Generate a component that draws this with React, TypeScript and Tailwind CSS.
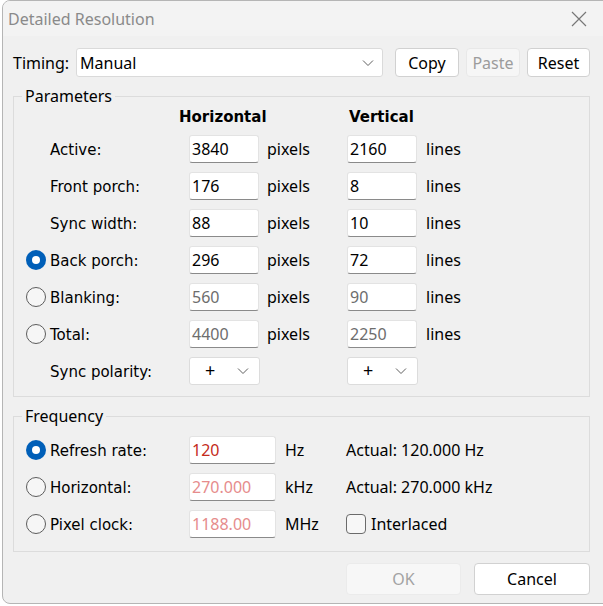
const ui = "font-['Noto_Sans',sans-serif] text-[16px]";
const lbl = "font-['DejaVu_Sans',sans-serif] text-[15px]";

function Chevron() {
  return (
    <svg width="12" height="8" viewBox="0 0 12 8" className="text-[#5f5f5f]">
      <polyline points="1,1.5 6,6.5 11,1.5" fill="none" stroke="currentColor" strokeWidth="1" />
    </svg>
  );
}

function Radio({ on }: { on?: boolean }) {
  if (on) {
    return (
      <span className="ml-[1px] flex h-[20px] w-[20px] items-center justify-center rounded-full bg-[#005fb8]">
        <span className="h-[8px] w-[8px] rounded-full bg-white" />
      </span>
    );
  }
  return <span className="ml-[1px] h-[20px] w-[20px] rounded-full border border-[#5c5c5c] bg-[#f6f6f6]" />;
}

function Field({ value, tone = "normal", wide }: { value: string; tone?: "normal" | "gray" | "red" | "pink"; wide?: boolean }) {
  const color =
    tone === "gray" ? "text-[#6d6d6d]" : tone === "red" ? "text-[#c42b1c]" : tone === "pink" ? "text-[#e68c8c]" : "text-black";
  return (
    <div
      className={`flex h-[28px] items-center rounded-[3px] border border-[#e3e3e3] border-b-[#8a8a8a] bg-white pl-[2px] ${ui} ${color} ${
        wide ? "w-[87px]" : "w-[70px]"
      }`}
    >
      {value}
    </div>
  );
}

function Label({ text, radio }: { text: string; radio?: "on" | "off" }) {
  return (
    <div className="flex items-center">
      <span className="flex w-[25px] justify-start">{radio && <Radio on={radio === "on"} />}</span>
      <span className={`${lbl} mt-[3px]`}>{text}</span>
    </div>
  );
}

function Polarity() {
  return (
    <div className="flex h-[28px] w-[71px] items-center justify-between rounded-[3px] border border-[#dcdcdc] bg-white pl-[15px] pr-[10px]">
      <span className={`${ui} text-[18px]`}>+</span>
      <Chevron />
    </div>
  );
}

const rows: { label: string; radio?: "on" | "off"; h: string; v: string; tone?: "gray" }[] = [
  { label: "Active:", h: "3840", v: "2160" },
  { label: "Front porch:", h: "176", v: "8" },
  { label: "Sync width:", h: "88", v: "10" },
  { label: "Back porch:", radio: "on", h: "296", v: "72" },
  { label: "Blanking:", radio: "off", h: "560", v: "90", tone: "gray" },
  { label: "Total:", radio: "off", h: "4400", v: "2250", tone: "gray" },
];

export default function App() {
  return (
    <div className="min-h-screen bg-white pl-[2px]">
      <div className="h-[604px] w-[620px] overflow-hidden rounded-lg border border-[#b5b5b5] bg-[#f0f0f0] text-black">
        {/* title bar */}
        <div className="flex h-[35px] items-center justify-between bg-[#f3f3f3] pl-[5px] pr-[34px]">
          <span className={`${ui} text-[16.5px] text-[#8a8a8a]`}>Detailed Resolution</span>
          <svg width="16" height="16" viewBox="0 0 16 16" className="text-[#777]">
            <path d="M1 1 L15 15 M15 1 L1 15" stroke="currentColor" strokeWidth="1.2" />
          </svg>
        </div>

        <div className="w-[587px] pl-[10px]">
          {/* timing row */}
          <div className="mt-[12px] flex items-center">
            <span className={`${ui} w-[63px]`}>Timing:</span>
            <div className="flex h-[29px] w-[307px] items-center justify-between rounded-[3px] border border-[#dadada] bg-white pl-[3px] pr-[8px]">
              <span className={ui}>Manual</span>
              <Chevron />
            </div>
            <div className={`ml-[12px] flex gap-[7px] ${ui}`}>
              <button className="h-[29px] w-[64px] rounded-[4px] border border-[#d1d1d1] bg-white">Copy</button>
              <button className="h-[29px] w-[54px] rounded-[4px] border border-[#e8e8e8] bg-[#f6f6f6] text-[#9c9c9c]">Paste</button>
              <button className="h-[29px] w-[63px] rounded-[4px] border border-[#d1d1d1] bg-white">Reset</button>
            </div>
          </div>

          {/* parameters */}
          <fieldset className="mt-[7px] h-[313px] border border-[#dcdcdc] pl-[11px]">
            <legend className={`${ui} -ml-[3px] px-[3px]`}>Parameters</legend>
            <div className="grid grid-cols-[164px_78px_80px_79px_auto] items-center">
              <div className="h-[22px]" />
              <div className={`${lbl} col-span-2 -ml-[10px] self-start leading-[18px] font-bold`}>Horizontal</div>
              <div className={`${lbl} col-span-2 ml-[2px] self-start leading-[18px] font-bold`}>Vertical</div>
              {rows.map((r) => (
                <div key={r.label} className="contents">
                  <div className="flex h-[37px] items-center">
                    <Label text={r.label} radio={r.radio} />
                  </div>
                  <Field value={r.h} tone={r.tone} />
                  <span className={ui}>pixels</span>
                  <Field value={r.v} tone={r.tone} />
                  <span className={ui}>lines</span>
                </div>
              ))}
              <div className="flex h-[37px] items-center">
                <Label text="Sync polarity:" />
              </div>
              <Polarity />
              <span />
              <Polarity />
              <span />
            </div>
          </fieldset>

          {/* frequency */}
          <fieldset className="mt-[7px] h-[148px] border border-[#dcdcdc] pl-[11px]">
            <legend className={`${ui} -ml-[3px] px-[3px]`}>Frequency</legend>
            <div className="mt-[3px] grid grid-cols-[164px_96px_61px_auto] items-center">
              <div className="flex h-[37px] items-center">
                <Label text="Refresh rate:" radio="on" />
              </div>
              <Field value="120" tone="red" wide />
              <span className={ui}>Hz</span>
              <span className={ui}>Actual: 120.000 Hz</span>

              <div className="flex h-[37px] items-center">
                <Label text="Horizontal:" radio="off" />
              </div>
              <Field value="270.000" tone="pink" wide />
              <span className={ui}>kHz</span>
              <span className={ui}>Actual: 270.000 kHz</span>

              <div className="flex h-[37px] items-center">
                <Label text="Pixel clock:" radio="off" />
              </div>
              <Field value="1188.00" tone="pink" wide />
              <span className={ui}>MHz</span>
              <div className="flex items-center gap-[5px]">
                <span className="h-[20px] w-[20px] rounded-[4px] border border-[#6b6b6b] bg-[#f7f7f7]" />
                <span className={ui}>Interlaced</span>
              </div>
            </div>
          </fieldset>

          {/* buttons */}
          <div className={`mt-[11px] flex justify-end gap-[13px] ${ui}`}>
            <button className="h-[32px] w-[115px] rounded-[4px] border border-[#ebebeb] bg-[#f7f7f7] text-[#a3a3a3]">OK</button>
            <button className="h-[32px] w-[116px] rounded-[4px] border border-[#d1d1d1] bg-white">Cancel</button>
          </div>
        </div>
      </div>
    </div>
  );
}
